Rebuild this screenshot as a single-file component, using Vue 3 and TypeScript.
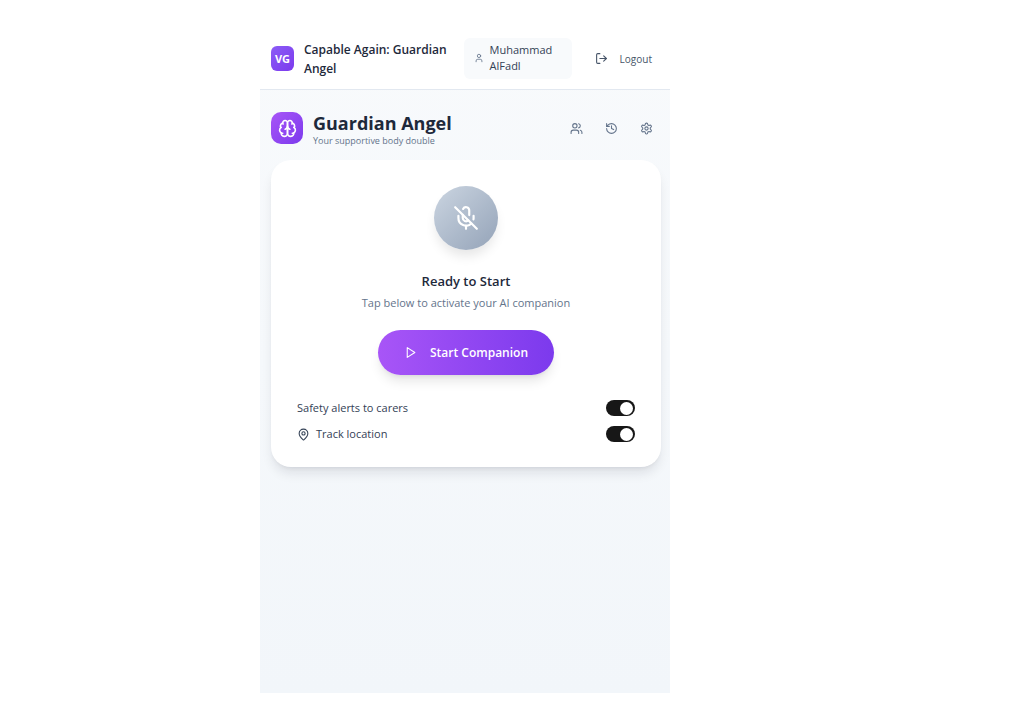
<script setup lang="ts">
import { ref } from 'vue'

interface IconAction {
  label: string
  paths: string[]
  circle?: { cx: number; cy: number; r: number }
}

const safetyAlerts = ref(true)
const trackLocation = ref(true)

const actions: IconAction[] = [
  {
    label: 'Contacts',
    paths: [
      'M16 21v-2a4 4 0 0 0-4-4H6a4 4 0 0 0-4 4v2',
      'M22 21v-2a4 4 0 0 0-3-3.87',
      'M16 3.13a4 4 0 0 1 0 7.75',
    ],
    circle: { cx: 9, cy: 7, r: 4 },
  },
  {
    label: 'History',
    paths: ['M3 12a9 9 0 1 0 9-9 9.75 9.75 0 0 0-6.74 2.74L3 8', 'M3 3v5h5', 'M12 7v5l4 2'],
  },
  {
    label: 'Settings',
    paths: [
      'M12.22 2h-.44a2 2 0 0 0-2 2v.18a2 2 0 0 1-1 1.73l-.43.25a2 2 0 0 1-2 0l-.15-.08a2 2 0 0 0-2.73.73l-.22.38a2 2 0 0 0 .73 2.73l.15.1a2 2 0 0 1 1 1.72v.51a2 2 0 0 1-1 1.74l-.15.09a2 2 0 0 0-.73 2.73l.22.38a2 2 0 0 0 2.73.73l.15-.08a2 2 0 0 1 2 0l.43.25a2 2 0 0 1 1 1.73V20a2 2 0 0 0 2 2h.44a2 2 0 0 0 2-2v-.18a2 2 0 0 1 1-1.73l.43-.25a2 2 0 0 1 2 0l.15.08a2 2 0 0 0 2.73-.73l.22-.39a2 2 0 0 0-.73-2.73l-.15-.08a2 2 0 0 1-1-1.74v-.5a2 2 0 0 1 1-1.74l.15-.09a2 2 0 0 0 .73-2.73l-.22-.38a2 2 0 0 0-2.73-.73l-.15.08a2 2 0 0 1-2 0l-.43-.25a2 2 0 0 1-1-1.73V4a2 2 0 0 0-2-2z',
    ],
    circle: { cx: 12, cy: 12, r: 3 },
  },
]
</script>

<template>
  <div class="page">
    <div class="app">
      <header class="topbar">
        <div class="logo">VG</div>
        <div class="brand">Capable Again: Guardian Angel</div>
        <div class="user">
          <svg class="icon icon-user" viewBox="0 0 24 24" aria-hidden="true">
            <path d="M19 21v-2a4 4 0 0 0-4-4H9a4 4 0 0 0-4 4v2" />
            <circle cx="12" cy="7" r="4" />
          </svg>
          <span>Muhammad AlFadl</span>
        </div>
        <button class="logout" type="button">
          <svg class="icon icon-small" viewBox="0 0 24 24" aria-hidden="true">
            <path d="M9 21H5a2 2 0 0 1-2-2V5a2 2 0 0 1 2-2h4" />
            <path d="m16 17 5-5-5-5" />
            <path d="M21 12H9" />
          </svg>
          Logout
        </button>
      </header>

      <main class="content">
        <div class="heading">
          <div class="badge">
            <svg class="icon icon-brain" viewBox="0 0 24 24" aria-hidden="true">
              <path d="M12 5a3 3 0 1 0-5.997.125 4 4 0 0 0-2.526 5.77 4 4 0 0 0 .556 6.588A4 4 0 1 0 12 18Z" />
              <path d="M12 5a3 3 0 1 1 5.997.125 4 4 0 0 1 2.526 5.77 4 4 0 0 1-.556 6.588A4 4 0 1 1 12 18Z" />
              <path d="M15 13a4.5 4.5 0 0 1-3-4 4.5 4.5 0 0 1-3 4" />
              <path d="M17.599 6.5a3 3 0 0 0 .399-1.375" />
              <path d="M6.003 5.125A3 3 0 0 0 6.401 6.5" />
              <path d="M3.477 10.896a4 4 0 0 1 .585-.396" />
              <path d="M19.938 10.5a4 4 0 0 1 .585.396" />
              <path d="M6 18a4 4 0 0 1-1.967-.516" />
              <path d="M19.967 17.484A4 4 0 0 1 18 18" />
            </svg>
          </div>
          <div class="titles">
            <h1>Guardian Angel</h1>
            <p>Your supportive body double</p>
          </div>
          <nav class="actions" aria-label="Tools">
            <button
              v-for="action in actions"
              :key="action.label"
              type="button"
              :aria-label="action.label"
            >
              <svg class="icon icon-small" viewBox="0 0 24 24" aria-hidden="true">
                <path v-for="d in action.paths" :key="d" :d="d" />
                <circle v-if="action.circle" v-bind="action.circle" />
              </svg>
            </button>
          </nav>
        </div>

        <section class="card">
          <div class="orb">
            <svg class="icon icon-mic" viewBox="0 0 24 24" aria-hidden="true">
              <path d="m2 2 20 20" />
              <path d="M18.89 13.23A7.12 7.12 0 0 0 19 12v-2" />
              <path d="M5 10v2a7 7 0 0 0 12 5" />
              <path d="M15 9.34V5a3 3 0 0 0-5.68-1.33" />
              <path d="M9 9v3a3 3 0 0 0 5.12 2.12" />
              <path d="M12 19v3" />
            </svg>
          </div>
          <h2>Ready to Start</h2>
          <p class="hint">Tap below to activate your AI companion</p>
          <button class="start" type="button">
            <svg class="icon icon-small" viewBox="0 0 24 24" aria-hidden="true">
              <path d="m6 3 14 9-14 9z" />
            </svg>
            Start Companion
          </button>
          <div class="options">
            <div class="option">
              <label for="safety">Safety alerts to carers</label>
              <input id="safety" v-model="safetyAlerts" class="switch" type="checkbox" role="switch" />
            </div>
            <div class="option">
              <label for="location">
                <svg class="icon icon-small" viewBox="0 0 24 24" aria-hidden="true">
                  <path d="M20 10c0 5-5.54 10.19-7.4 11.8a1 1 0 0 1-1.2 0C9.54 20.19 4 15 4 10a8 8 0 0 1 16 0" />
                  <circle cx="12" cy="10" r="3" />
                </svg>
                Track location
              </label>
              <input id="location" v-model="trackLocation" class="switch" type="checkbox" role="switch" />
            </div>
          </div>
        </section>
      </main>
    </div>
  </div>
</template>

<style>
body {
  margin: 0;
  background: #fff;
}
</style>

<style scoped>
* {
  box-sizing: border-box;
}

.page {
  display: grid;
  grid-template-columns: 260px minmax(0, 410px) 1fr;
  min-height: 100vh;
  padding: 28px 0 12px;
  font-family: 'Open Sans', 'Noto Sans', sans-serif;
  color: #1e293b;
}

.app {
  grid-column: 2;
  display: flex;
  flex-direction: column;
  background: linear-gradient(180deg, #f8fafc, #f2f6fa);
}

h1,
h2,
p {
  margin: 0;
}

button {
  font: inherit;
  color: inherit;
  border: 0;
  background: none;
  padding: 0;
  cursor: pointer;
}

.icon {
  flex: none;
  display: block;
  fill: none;
  stroke: currentColor;
  stroke-width: 2;
  stroke-linecap: round;
  stroke-linejoin: round;
}

.icon-user {
  width: 10px;
  height: 10px;
  color: #64748b;
}

.icon-small {
  width: 13px;
  height: 13px;
}

.icon-brain {
  width: 19px;
  height: 19px;
}

.icon-mic {
  width: 26px;
  height: 26px;
}

.topbar {
  display: flex;
  align-items: center;
  padding: 10px 18px 10px 11px;
  background: #fff;
  border-bottom: 1px solid #e2e8f0;
}

.logo {
  flex: none;
  display: grid;
  place-items: center;
  width: 23px;
  height: 25px;
  border-radius: 6px;
  background: linear-gradient(135deg, #8b5cf6, #7c3aed);
  color: #fff;
  font-size: 11px;
  font-weight: 700;
}

.brand {
  flex: 1;
  margin: 0 12px 0 10px;
  color: #1e293b;
  font-size: 12px;
  line-height: 19px;
  font-weight: 600;
}

.user {
  display: flex;
  align-items: center;
  gap: 6px;
  width: 108px;
  min-height: 41px;
  padding: 3px 10px 5px;
  border-radius: 6px;
  background: #f8fafc;
  color: #334155;
  font-size: 11px;
  line-height: 16px;
}

.logout {
  display: flex;
  align-items: center;
  gap: 12px;
  margin-left: 23px;
  color: #475569;
  font-size: 10px;
  font-weight: 500;
}

.content {
  padding: 22px 9px 20px 11px;
}

.heading {
  display: flex;
  align-items: flex-start;
  margin-bottom: 12px;
}

.badge {
  flex: none;
  display: grid;
  place-items: center;
  width: 32px;
  height: 32px;
  border-radius: 10px;
  background: linear-gradient(135deg, #a855f7, #7c3aed);
  color: #fff;
}

.titles {
  flex: 1;
  margin-left: 10px;
}

h1 {
  font-size: 18px;
  line-height: 22px;
  font-weight: 700;
}

.titles p {
  color: #64748b;
  font-size: 9px;
  line-height: 14px;
}

.actions {
  display: flex;
  gap: 9px;
  padding-right: 2px;
  color: #64748b;
}

.actions button {
  display: grid;
  place-items: center;
  width: 26px;
  height: 32px;
}

.card {
  display: flex;
  flex-direction: column;
  align-items: center;
  padding: 26px 26px 24px;
  border-radius: 20px;
  background: #fff;
  box-shadow: 0 8px 12px -2px rgb(15 23 42 / 10%), 0 3px 5px -3px rgb(15 23 42 / 10%);
}

.orb {
  display: grid;
  place-items: center;
  width: 64px;
  height: 64px;
  border-radius: 50%;
  background: linear-gradient(135deg, #cbd5e1, #94a3b8);
  color: #fff;
  box-shadow: 0 8px 12px -2px rgb(0 0 0 / 10%);
}

h2 {
  margin-top: 20px;
  font-size: 13px;
  line-height: 22px;
  font-weight: 600;
}

.hint {
  margin-top: 3px;
  color: #64748b;
  font-size: 11px;
  line-height: 16px;
}

.start {
  display: flex;
  align-items: center;
  justify-content: center;
  gap: 13px;
  height: 45px;
  margin-top: 19px;
  padding: 0 26px;
  border-radius: 23px;
  background: linear-gradient(90deg, #a855f7, #7c3aed);
  color: #fff;
  font-size: 12px;
  font-weight: 600;
  box-shadow: 0 8px 12px -2px rgb(0 0 0 / 10%), 0 3px 5px -3px rgb(0 0 0 / 10%);
}

.options {
  display: flex;
  flex-direction: column;
  gap: 8px;
  align-self: stretch;
  margin-top: 24px;
}

.option {
  display: flex;
  align-items: center;
  justify-content: space-between;
}

.option label {
  display: flex;
  align-items: center;
  gap: 6px;
  color: #334155;
  font-size: 11px;
  line-height: 18px;
}

.switch {
  appearance: none;
  display: flex;
  align-items: center;
  width: 29px;
  height: 16px;
  margin: 0;
  padding: 1px 2px;
  border-radius: 8px;
  background: #cbd5e1;
  cursor: pointer;
}

.switch::before {
  content: '';
  width: 13px;
  height: 13px;
  border-radius: 50%;
  background: #fff;
}

.switch:checked {
  justify-content: flex-end;
  background: #171717;
}
</style>
